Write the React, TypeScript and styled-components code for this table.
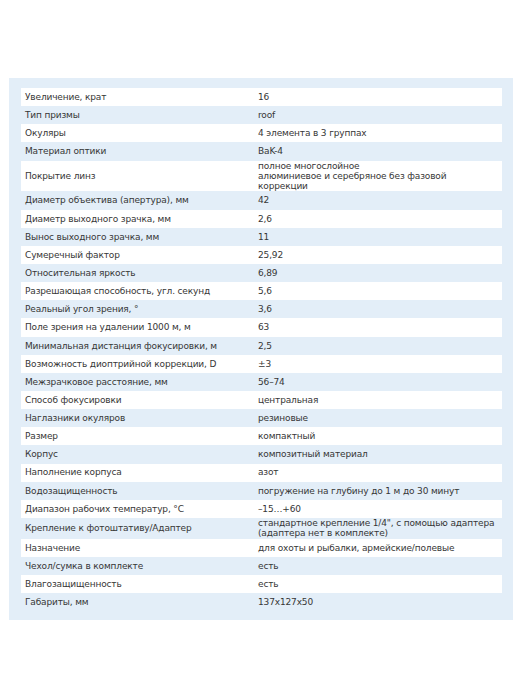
import * as React from 'react';
import styled, { createGlobalStyle } from 'styled-components';

const GlobalStyle = createGlobalStyle`
    html, body {
        margin: 0;
        padding: 0;
        background: #ffffff;
    }
`;

const Page = styled.div`
    width: 525px;
    height: 700px;
    padding-top: 78px;
    padding-left: 9px;
    box-sizing: border-box;
`;

const Panel = styled.div`
    width: 504px;
    background: #e3eef8;
    padding: 10px 11px 9px 12px;
    box-sizing: border-box;
    font-family: "DejaVu Sans", Verdana, sans-serif;
    font-size: 9px;
    letter-spacing: -0.15px;
    color: #363636;
`;

const Row = styled.div<{ $white: boolean }>`
    display: grid;
    grid-template-columns: 233px 1fr;
    align-items: center;
    min-height: 18.15px;
    background: ${p => (p.$white ? '#ffffff' : 'transparent')};
`;

const Cell = styled.div`
    padding: 0 4px;
    line-height: 10.3px;
    white-space: nowrap;
`;

const specs: [string, string][] = [
    ['Увеличение, крат', '16'],
    ['Тип призмы', 'roof'],
    ['Окуляры', '4 элемента в 3 группах'],
    ['Материал оптики', 'BaK-4'],
    ['Покрытие линз', 'полное многослойное\nалюминиевое и серебряное без фазовой\nкоррекции'],
    ['Диаметр объектива (апертура), мм', '42'],
    ['Диаметр выходного зрачка, мм', '2,6'],
    ['Вынос выходного зрачка, мм', '11'],
    ['Сумеречный фактор', '25,92'],
    ['Относительная яркость', '6,89'],
    ['Разрешающая способность, угл. секунд', '5,6'],
    ['Реальный угол зрения, °', '3,6'],
    ['Поле зрения на удалении 1000 м, м', '63'],
    ['Минимальная дистанция фокусировки, м', '2,5'],
    ['Возможность диоптрийной коррекции, D', '±3'],
    ['Межзрачковое расстояние, мм', '56–74'],
    ['Способ фокусировки', 'центральная'],
    ['Наглазники окуляров', 'резиновые'],
    ['Размер', 'компактный'],
    ['Корпус', 'композитный материал'],
    ['Наполнение корпуса', 'азот'],
    ['Водозащищенность', 'погружение на глубину до 1 м до 30 минут'],
    ['Диапазон рабочих температур, °С', '–15…+60'],
    ['Крепление к фотоштативу/Адаптер', 'стандартное крепление 1/4", с помощью адаптера\n(адаптера нет в комплекте)'],
    ['Назначение', 'для охоты и рыбалки, армейские/полевые'],
    ['Чехол/сумка в комплекте', 'есть'],
    ['Влагозащищенность', 'есть'],
    ['Габариты, мм', '137x127x50'],
];

export default function App() {
    return (
        <Page>
            <GlobalStyle />
            <Panel>
                {specs.map(([name, value], i) => (
                    <Row key={name} $white={i % 2 === 0}>
                        <Cell>{name}</Cell>
                        <Cell>
                            {value.split('\n').map((line, j) => (
                                <div key={j}>{line}</div>
                            ))}
                        </Cell>
                    </Row>
                ))}
            </Panel>
        </Page>
    );
}
